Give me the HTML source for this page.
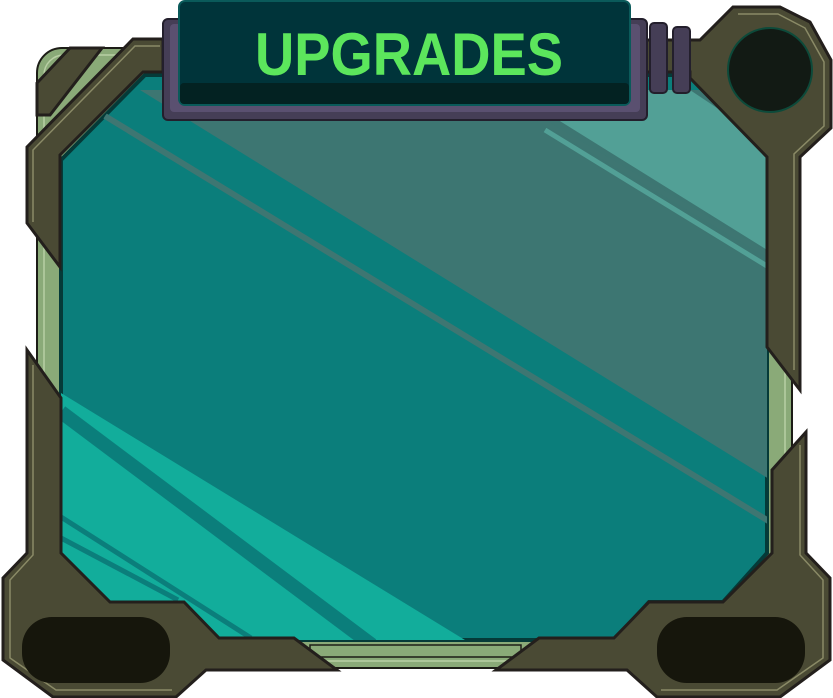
<!DOCTYPE html>
<html><head><meta charset="utf-8"><style>
html,body{margin:0;padding:0;background:#fff;width:833px;height:698px;overflow:hidden}
svg{display:block}
</style></head><body>
<svg width="833" height="698" viewBox="0 0 833 698" xmlns="http://www.w3.org/2000/svg">
<!-- green outer border -->
<rect x="37" y="48" width="755" height="620" rx="25" fill="#8aaa78" stroke="#1c1c16" stroke-width="2"/>
<rect x="44" y="55" width="741" height="606" rx="20" fill="none" stroke="#b8cfa4" stroke-width="1.5"/>
<!-- glass -->
<defs><clipPath id="g"><polygon points="61,160 145,75 690,75 767,155 767,553 723,602 649,602 614,640 219,640 184,602 110,602 61,553"/></clipPath></defs>
<polygon points="61,160 145,75 690,75 767,155 767,553 723,602 649,602 614,640 219,640 184,602 110,602 61,553" fill="#0b7e7b" stroke="#053a38" stroke-width="4"/>
<g clip-path="url(#g)">
 <polygon points="140,90 900,90 900,560" fill="#3d7672"/>
 <line x1="105" y1="116" x2="780" y2="528" stroke="#3e7672" stroke-width="6"/>
 <polygon points="510,90 690,90 780,150 780,258" fill="#52a096"/>
 <line x1="520" y1="108" x2="780" y2="262" stroke="#3e7672" stroke-width="5"/>
 <line x1="545" y1="130" x2="780" y2="274" stroke="#52a096" stroke-width="5"/>
 <polygon points="61,393 465,640 219,640 184,602 110,602 61,553" fill="#12ad9b"/>
 <line x1="61" y1="412" x2="372" y2="645" stroke="#0b7e7b" stroke-width="14"/>
 <line x1="61" y1="517" x2="251" y2="638" stroke="#0b7e7b" stroke-width="5"/>
 <line x1="61" y1="538" x2="178" y2="600" stroke="#0b7e7b" stroke-width="5"/>
</g>
<rect x="310" y="645" width="211" height="12" fill="#8aaa78" stroke="#1c1c16" stroke-width="1.5"/>
<!-- frame pieces -->
<g fill="#4a4a34" stroke="#231f1c" stroke-width="3" stroke-linejoin="miter">
 <polygon points="37,83 70,48 102,48 50,115 37,115"/>
 <polygon points="27,147 133,39 163,39 163,72 143,72 60,155 60,267 27,223"/>
 <polygon points="27,350 61,398 61,553 110,602 184,602 219,638 294,638 337,670 206,670 176,697 53,697 3,660 3,578 27,553"/>
 <polygon points="806,432 772,470 772,553 723,602 649,602 614,638 539,638 496,670 627,670 657,697 780,697 830,660 830,578 806,553"/>
 <polygon points="733,7 780,7 810,22 831,60 831,128 800,157 800,390 767,347 767,157 690,78 690,72 640,72 640,40 700,40"/>
</g>
<g fill="none" stroke="#8a8a66" stroke-width="1.5">
 <polyline points="33,222 33,150 135,46 160,46"/>
 <polyline points="33,365 33,555 10,580 10,658 56,690 172,690"/>
 <polyline points="800,445 800,555 823,580 823,658 777,690 661,690"/>
 <polyline points="738,14 778,14 805,28 824,62 824,126 794,154 794,370"/>
</g>
<!-- dark ovals -->
<rect x="22" y="617" width="148" height="66" rx="30" fill="#16160c"/>
<rect x="657" y="617" width="148" height="66" rx="30" fill="#16160c"/>
<circle cx="770" cy="70" r="42" fill="#121a14" stroke="#0d4a3a" stroke-width="2"/>
<!-- connector rings -->
<g fill="#453e56" stroke="#231f2c" stroke-width="2">
 <rect x="650" y="23" width="17" height="70" rx="4"/>
 <rect x="673" y="27" width="17" height="66" rx="4"/>
</g>
<!-- title plate -->
<rect x="163" y="19" width="484" height="101" rx="5" fill="#453e56" stroke="#231f2c" stroke-width="2"/>
<rect x="170" y="24" width="470" height="88" rx="4" fill="#5a5070"/>
<rect x="179" y="1" width="451" height="104" rx="6" fill="#00343a" stroke="#0a5a5a" stroke-width="2"/>
<rect x="180" y="83" width="449" height="21" rx="4" fill="#032222"/>
<text x="409" y="75" text-anchor="middle" font-family="Liberation Sans, sans-serif" font-weight="bold" font-size="60" fill="#5ce65c" textLength="308" lengthAdjust="spacingAndGlyphs">UPGRADES</text>
</svg>
</body></html>
